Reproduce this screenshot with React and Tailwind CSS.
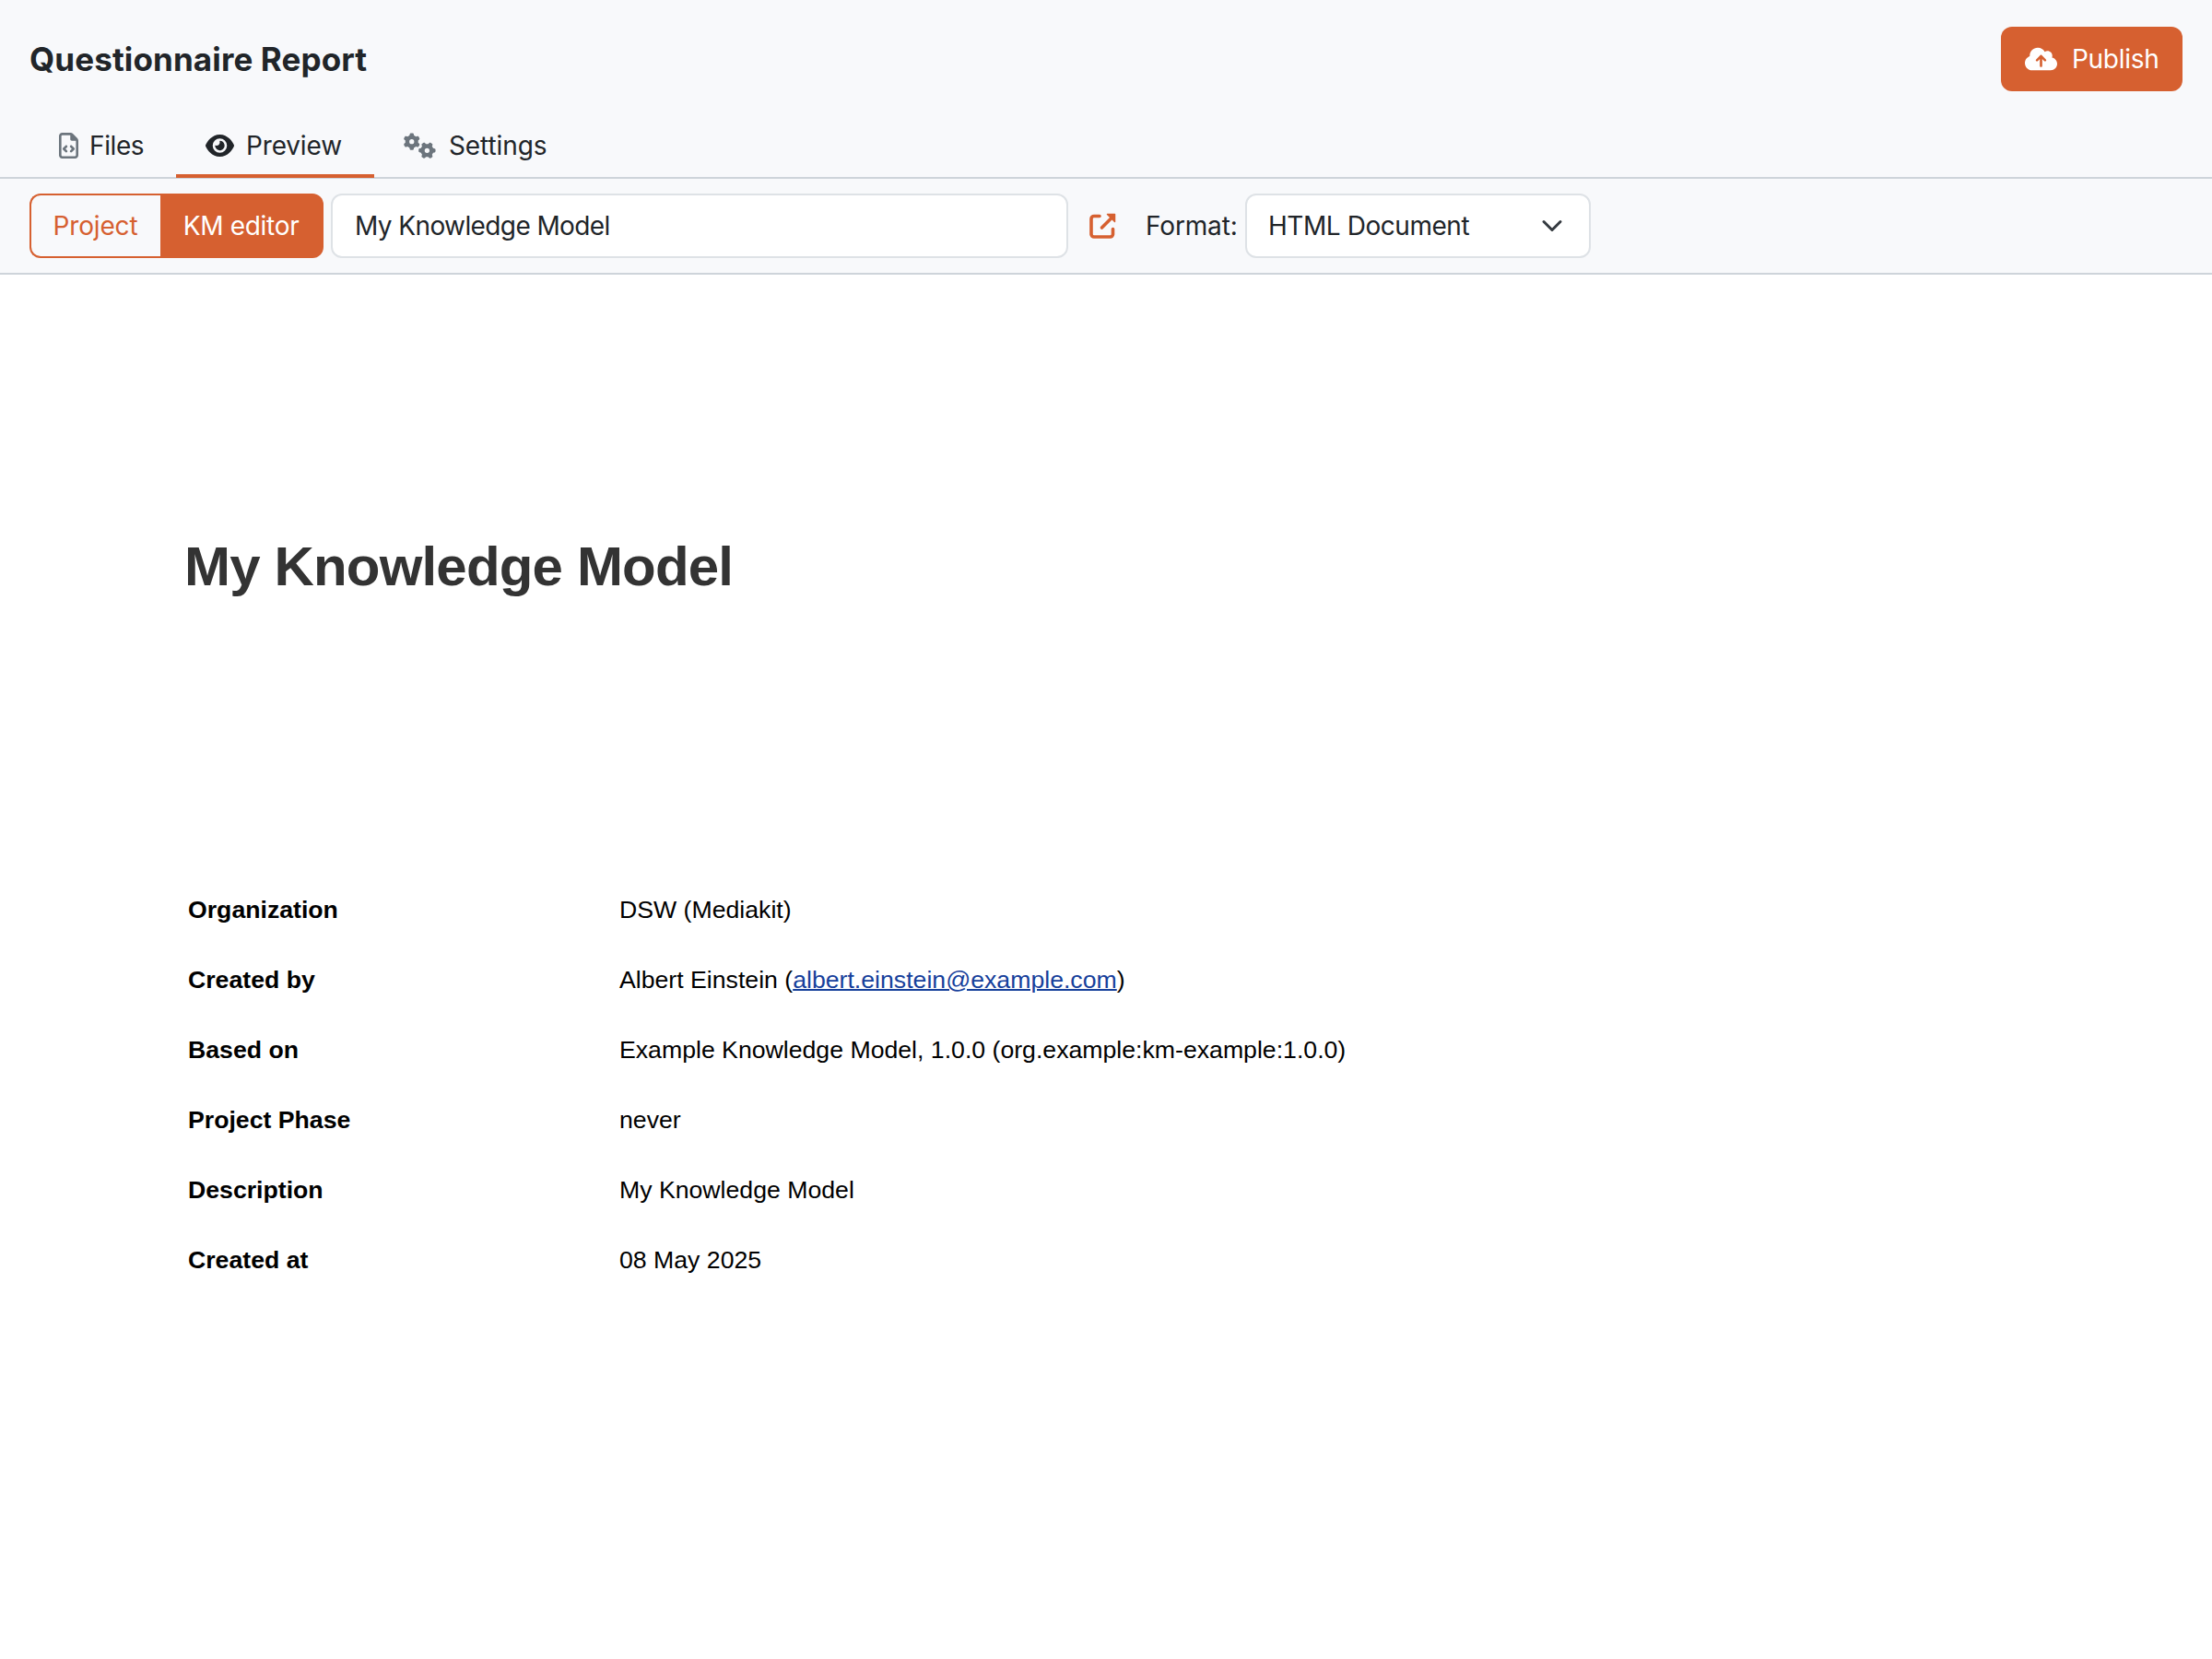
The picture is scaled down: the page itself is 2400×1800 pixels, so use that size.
import { FaRegFileCode, FaEye, FaGears, FaCloudArrowUp } from 'react-icons/fa6'

const rows = [
  { label: 'Organization', value: 'DSW (Mediakit)' },
  { label: 'Created by', value: 'Albert Einstein', email: 'albert.einstein@example.com' },
  { label: 'Based on', value: 'Example Knowledge Model, 1.0.0 (org.example:km-example:1.0.0)' },
  { label: 'Project Phase', value: 'never' },
  { label: 'Description', value: 'My Knowledge Model' },
  { label: 'Created at', value: '08 May 2025' },
]

function ExternalLinkIcon() {
  return (
    <svg viewBox="0 0 30 30" className="h-[30px] w-[30px]" fill="none" stroke="currentColor" strokeWidth="3.6" strokeLinecap="round" strokeLinejoin="round">
      <path d="M12 4.500H6A3 3 0 0 0 3 7.500V24A3 3 0 0 0 6 27H23.500A3 3 0 0 0 26.500 24V18.500" />
      <path d="M14.500 17 25 6.500" />
      <path d="M20.500 2.500H28.500V10.500Z" fill="currentColor" strokeWidth="1.500" />
    </svg>
  )
}

export default function App() {
  return (
    <div className="flex h-[1800px] w-[2400px] flex-col bg-white font-['Inter',sans-serif] text-[28px] leading-[42px] text-[#212529]">
      <header className="border-b-2 border-[#ced4da] bg-[#f8f9fb]">
        <div className="flex h-32 items-center justify-between px-8">
          <h2 className="text-[35px] font-bold tracking-[0.12px]">Questionnaire Report</h2>
          <button className="flex h-[70px] w-[197px] items-center rounded-xl bg-[#d66030] pl-[26px] text-white">
            <FaCloudArrowUp className="h-7 w-[35px]" />
            <span className="ml-4 tracking-[-0.3px]">Publish</span>
          </button>
        </div>

        {/* Tabs */}
        <nav className="flex h-16 pl-8">
          <a className="flex h-[65px] w-[159px] items-center border-b-4 border-transparent pb-[2px] pl-8">
            <FaRegFileCode className="h-7 w-[21px] text-[#6c757d]" />
            <span className="ml-3 tracking-[-0.4px]">Files</span>
          </a>
          <a className="flex h-[65px] w-[215px] items-center border-b-4 border-[#d66030] pb-[2px] pl-8">
            <FaEye className="h-7 w-[31px]" />
            <span className="ml-[13px] tracking-[-0.15px]">Preview</span>
          </a>
          <a className="flex h-[65px] items-center border-b-4 border-transparent pb-[2px] pl-8">
            <FaGears className="h-7 w-[35px] text-[#6c757d]" />
            <span className="ml-[14px] tracking-[-0.1px]">Settings</span>
          </a>
        </nav>
      </header>

      {/* Toolbar */}
      <div className="flex h-[104px] items-center border-b-2 border-[#ced4da] bg-[#f8f9fb] px-8">
        <div className="flex h-[70px]">
          <button className="w-[142px] rounded-l-xl border-2 border-r-0 border-[#d66030] pr-px tracking-[-0.15px] text-[#d66030]">Project</button>
          <button className="w-[177px] rounded-r-xl bg-[#d66030] pr-[2px] tracking-[-0.3px] text-white">KM editor</button>
        </div>
        <div className="ml-2 flex h-[70px] w-[800px] items-center rounded-xl border-2 border-[#dee2e6] bg-white pl-6 tracking-[-0.6px]">
          My Knowledge Model
        </div>
        <a className="ml-[22px] text-[#d66030]">
          <ExternalLinkIcon />
        </a>
        <span className="ml-[32px] w-[108px] tracking-[-0.15px]">Format:</span>
        <div className="flex h-[70px] w-[375px] items-center justify-between rounded-xl border-2 border-[#dee2e6] bg-white pl-[23px] pr-[26px] tracking-[-0.45px]">
          HTML Document
          <svg viewBox="0 0 16 16" className="h-6 w-7" fill="none" stroke="#343a40" strokeWidth="2" strokeLinecap="round" strokeLinejoin="round">
            <path d="m2 5 6 6 6-6" />
          </svg>
        </div>
      </div>

      {/* Document */}
      <main className="px-[200px] font-['Liberation_Sans',Arial,sans-serif] text-[26.67px] leading-[40px] text-black">
        <h1 className="pt-[279px] text-[60px] font-bold leading-[76px] tracking-[-0.83px] text-[#333]">My Knowledge Model</h1>
        <dl className="mt-[296px] pl-1">
          {rows.map((row) => (
            <div key={row.label} className="flex h-[76px] items-center">
              <dt className="w-[468px] font-bold">{row.label}</dt>
              <dd>
                {row.value}
                {row.email && (
                  <>
                    {' ('}
                    <a className="text-[#16409b] underline decoration-2">{row.email}</a>)
                  </>
                )}
              </dd>
            </div>
          ))}
        </dl>
      </main>
    </div>
  )
}
